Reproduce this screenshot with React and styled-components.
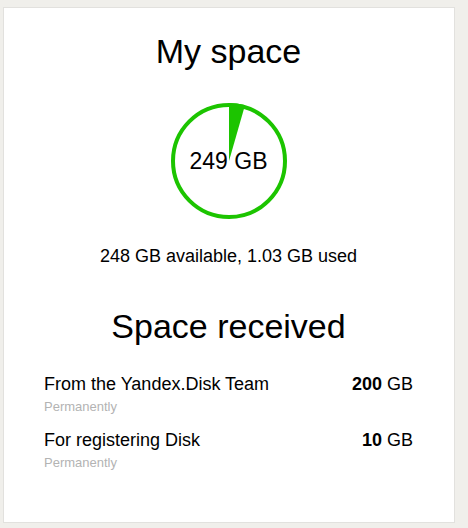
import styled, { createGlobalStyle } from "styled-components"

const GlobalStyle = createGlobalStyle`
  body {
    margin: 0;
    background: #f0efeb;
    font-family: "Liberation Sans", Arial, sans-serif;
    color: #000;
  }
`

const Page = styled.div`
  padding: 7px 13px 5px 3px;
`

const Card = styled.div`
  background: #fff;
  border: 1px solid #e2e1de;
  height: 516px;
  box-sizing: border-box;
  padding: 25px 41px 0 40px;
  display: flex;
  flex-direction: column;
  align-items: center;
`

const Title = styled.h1`
  font-size: 34px;
  font-weight: 400;
  line-height: 37px;
  margin: ${({ $top }) => $top || 0}px 0 0;
`

const Chart = styled.div`
  position: relative;
  width: 120px;
  height: 120px;
  margin-top: 31px;
  display: flex;
  align-items: center;
  justify-content: center;
`

const ChartSvg = styled.svg`
  position: absolute;
  inset: 0;
`

const ChartLabel = styled.span`
  position: relative;
  font-size: 23px;
`

const Summary = styled.p`
  font-size: 18px;
  line-height: 18px;
  margin: 26px 0 0;
`

const List = styled.div`
  align-self: stretch;
  margin-top: 30px;
  display: flex;
  flex-direction: column;
  gap: 17px;
`

const Item = styled.div`
  display: flex;
  flex-direction: column;
  gap: 7px;
`

const ItemRow = styled.div`
  display: flex;
  justify-content: space-between;
  font-size: 18px;
  line-height: 18px;
`

const Amount = styled.span`
  b {
    font-weight: 700;
  }
`

const Note = styled.span`
  font-size: 13px;
  line-height: 14px;
  color: #b3b3b3;
`

const GREEN = "#1cc400"

const UsageRing = () => {
  const cx = 60
  const cy = 60
  const r = 58
  const angle = (16 * Math.PI) / 180
  const x = cx + r * Math.sin(angle)
  const y = cy - r * Math.cos(angle)
  return (
    <ChartSvg width="120" height="120" viewBox="0 0 120 120">
      <circle cx={cx} cy={cy} r="56" fill="none" stroke={GREEN} strokeWidth="4" />
      <path d={`M${cx} ${cy} L${cx} ${cy - r} A${r} ${r} 0 0 1 ${x} ${y} Z`} fill={GREEN} />
    </ChartSvg>
  )
}

const items = [
  { label: "From the Yandex.Disk Team", amount: "200" },
  { label: "For registering Disk", amount: "10" },
]

const App = () => {
  return (
    <Page>
      <GlobalStyle />
      <Card>
        <Title>My space</Title>
        <Chart>
          <UsageRing />
          <ChartLabel>249 GB</ChartLabel>
        </Chart>
        <Summary>248 GB available, 1.03 GB used</Summary>
        <Title $top={43}>Space received</Title>
        <List>
          {items.map((item) => (
            <Item key={item.label}>
              <ItemRow>
                <span>{item.label}</span>
                <Amount>
                  <b>{item.amount}</b> GB
                </Amount>
              </ItemRow>
              <Note>Permanently</Note>
            </Item>
          ))}
        </List>
      </Card>
    </Page>
  )
}

export default App
